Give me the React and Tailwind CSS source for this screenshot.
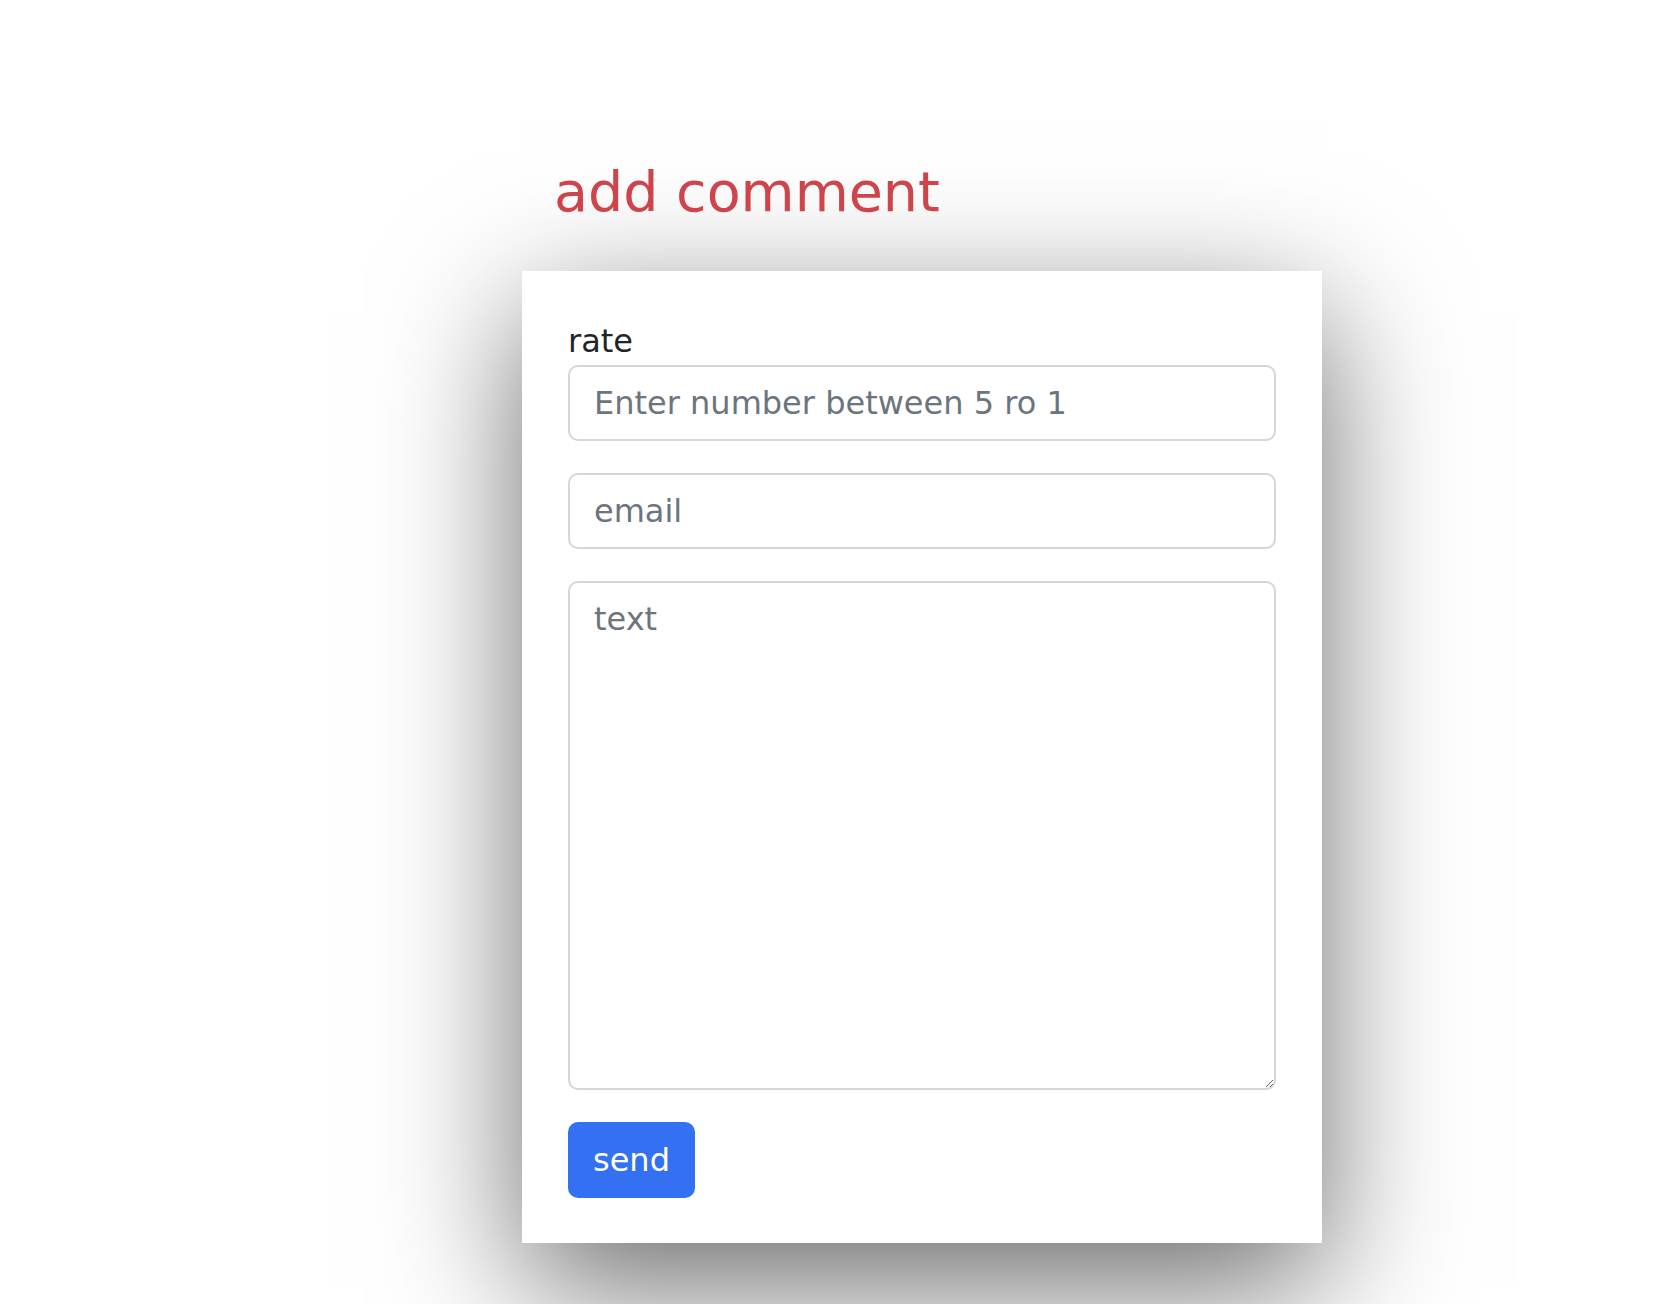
export default function App() {
  const font = { fontFamily: '"DejaVu Sans", Verdana, sans-serif' };

  return (
    <div className="min-h-[1304px] w-full bg-white" style={font}>
      <div className="pl-[522px] pt-[159px]">
        {/* Title */}
        <h1 className="ml-[32px] mb-[46px] text-[55.5px] leading-[66px] text-[#cf444a]">
          add comment
        </h1>

        {/* Card */}
        <div className="w-[800px] bg-white px-[46px] pt-[46px] pb-[45px] shadow-[0_43px_130px_rgba(0,0,0,0.58)]">
          <label className="block text-[32px] leading-[48px] text-[#212529]">
            rate
          </label>
          <div className="flex flex-col gap-[32px]">
            <input
              type="text"
              placeholder="Enter number between 5 ro 1"
              className="h-[76px] w-full rounded-[10px] border-2 border-[#d3d7db] bg-white px-[24px] text-[32px] text-[#212529] outline-none placeholder:text-[#6c757d]"
            />
            <input
              type="email"
              placeholder="email"
              className="h-[76px] w-full rounded-[10px] border-2 border-[#d3d7db] bg-white px-[24px] text-[32px] text-[#212529] outline-none placeholder:text-[#6c757d]"
            />
            <textarea
              placeholder="text"
              className="block h-[509px] w-full rounded-[10px] border-2 border-[#d3d7db] bg-white px-[24px] py-[12px] text-[32px] leading-[48px] text-[#212529] outline-none placeholder:text-[#6c757d]"
            />
            <div>
              <button className="h-[76px] rounded-[10px] bg-[#3370f2] px-[25px] text-[32px] text-white">
                send
              </button>
            </div>
          </div>
        </div>
      </div>
    </div>
  );
}
